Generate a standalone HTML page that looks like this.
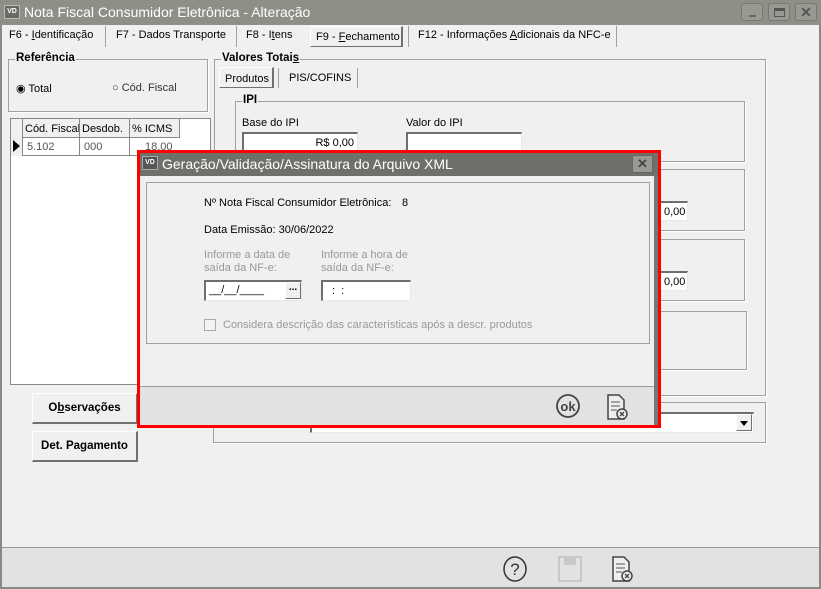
<!DOCTYPE html>
<html><head><meta charset="utf-8"><style>
*{box-sizing:border-box;margin:0;padding:0}
body{width:821px;height:589px;overflow:hidden;background:#f0f0f0;font-family:"Liberation Sans",sans-serif;font-size:11px;color:#000;position:relative}
.a{position:absolute}
.grp{position:absolute;border:1px solid #a0a0a0;box-shadow:1px 1px 0 #fff}
.lg{position:absolute;top:-8px;left:6px;background:#f0f0f0;font-weight:bold;padding:0 1px;font-size:11.5px}
.edit{position:absolute;background:#fff;border-top:2px solid #6e6e6e;border-left:2px solid #6e6e6e;border-bottom:1px solid #e8e8e8;border-right:1px solid #e8e8e8}
.btn{position:absolute;background:#f0f0f0;border:1px solid #fff;border-right:2px solid #707070;border-bottom:2px solid #707070;font-weight:bold;text-align:center;font-size:11.5px}
.tab{position:absolute;top:29px;height:20px;font-size:11px}
.sep{position:absolute;width:1px;background:#a0a0a0}
</style></head><body>
<div class="a" style="left:0;top:0;width:821px;height:589px;border:2px solid #8a8a85;border-top:none"></div>
<div class="a" style="left:0;top:0;width:821px;height:25px;background:#8f8f88"></div>
<div class="a" style="left:4px;top:5px;width:16px;height:14px;background:#6a6a66;border:1px solid #bbb;color:#fff;font-size:7px;font-weight:bold;text-align:center;line-height:12px">VD</div>
<div class="a" style="left:24px;top:4px;color:#fff;font-size:14px">Nota Fiscal Consumidor Eletrônica - Alteração</div>
<div class="a" style="left:741px;top:3px;width:22px;height:18px;border:1px solid #777;border-radius:3px;background:#999992"><div class="a" style="left:7px;top:11px;width:7px;height:2px;background:#666"></div></div>
<div class="a" style="left:768px;top:3px;width:22px;height:18px;border:1px solid #777;border-radius:3px;background:#999992"><div class="a" style="left:5px;top:4px;width:11px;height:9px;border:1px solid #555;border-top:3px solid #555"></div></div>
<div class="a" style="left:795px;top:3px;width:22px;height:18px;border:1px solid #777;border-radius:3px;background:#999992;color:#555;font-weight:bold;font-size:14px;text-align:center;line-height:16px">✕</div>
<div class="tab" style="left:9px">F6 - <u>I</u>dentificação</div>
<div class="sep" style="left:105px;top:26px;height:21px"></div>
<div class="tab" style="left:116px">F7 - Dados Transporte</div>
<div class="sep" style="left:236px;top:26px;height:21px"></div>
<div class="tab" style="left:246px">F8 - I<u>t</u>ens</div>
<div class="a" style="left:310px;top:26px;width:93px;height:21px;border:1px solid #fff;border-right:2px solid #707070;border-bottom:1px solid #707070;background:#f0f0f0"></div>
<div class="tab" style="left:316px;top:31px">F9 - <u>F</u>echamento</div>
<div class="sep" style="left:408px;top:26px;height:21px"></div>
<div class="tab" style="left:418px">F12 - Informações <u>A</u>dicionais da NFC-e</div>
<div class="sep" style="left:616px;top:26px;height:21px"></div>
<div class="grp" style="left:8px;top:59px;width:200px;height:53px"><div class="lg">Referência</div>
<div class="a" style="left:7px;top:22px">◉ Total</div><div class="a" style="left:103px;top:22px;color:#333">○ Cód. Fiscal</div></div>
<div class="a" style="left:10px;top:118px;width:201px;height:267px;background:#fff;border:1px solid #888"></div>
<div class="a" style="left:11px;top:119px;width:168px;height:19px;background:#f0f0f0;border-bottom:1px solid #888"></div>
<div class="a" style="left:11px;top:119px;width:12px;height:37px;background:#f0f0f0;border-right:1px solid #888"></div>
<div class="a" style="left:25px;top:123px">Cód. Fiscal</div>
<div class="sep" style="left:79px;top:119px;height:37px;background:#888"></div>
<div class="a" style="left:82px;top:123px">Desdob.</div>
<div class="sep" style="left:129px;top:119px;height:37px;background:#888"></div>
<div class="a" style="left:132px;top:123px">% ICMS</div>
<div class="sep" style="left:179px;top:119px;height:19px;background:#888"></div>
<div class="a" style="left:13px;top:140px;width:0;height:0;border-left:7px solid #000;border-top:6px solid transparent;border-bottom:6px solid transparent"></div>
<div class="a" style="left:27px;top:141px;color:#555">5.102</div>
<div class="a" style="left:84px;top:141px;color:#555">000</div>
<div class="a" style="left:145px;top:141px;color:#555">18,00</div>
<div class="a" style="left:23px;top:155px;width:157px;height:1px;background:#888"></div>
<div class="grp" style="left:214px;top:59px;width:552px;height:337px"><div class="lg">Valores Totai<u>s</u></div></div>
<div class="a" style="left:219px;top:67px;width:55px;height:21px;border:1px solid #fff;border-right:2px solid #707070;border-bottom:1px solid #707070;padding:5px 0 0 5px">Produtos</div>
<div class="a" style="left:289px;top:72px">PIS/COFINS</div>
<div class="sep" style="left:278px;top:68px;height:20px"></div>
<div class="sep" style="left:357px;top:68px;height:20px"></div>
<div class="grp" style="left:235px;top:101px;width:510px;height:61px"><div class="lg">IPI</div></div>
<div class="a" style="left:242px;top:117px">Base do IPI</div>
<div class="a" style="left:406px;top:117px">Valor do IPI</div>
<div class="edit" style="left:242px;top:132px;width:116px;height:20px;text-align:right;padding:3px 3px 0 0">R$ 0,00</div>
<div class="edit" style="left:406px;top:132px;width:116px;height:20px"></div>
<div class="grp" style="left:640px;top:169px;width:105px;height:62px"></div>
<div class="edit" style="left:640px;top:201px;width:48px;height:20px;padding:3px 0 0 22px">0,00</div>
<div class="grp" style="left:640px;top:239px;width:105px;height:62px"></div>
<div class="edit" style="left:640px;top:271px;width:48px;height:20px;padding:3px 0 0 22px">0,00</div>
<div class="grp" style="left:640px;top:311px;width:107px;height:59px"></div>
<div class="btn" style="left:32px;top:393px;width:106px;height:31px;padding-top:8px">O<u>b</u>servações</div>
<div class="btn" style="left:32px;top:431px;width:106px;height:31px;padding-top:8px">Det. Pa<u>g</u>amento</div>
<div class="grp" style="left:213px;top:402px;width:553px;height:41px"></div>
<div class="edit" style="left:310px;top:412px;width:444px;height:21px"></div>
<div class="a" style="left:736px;top:414px;width:16px;height:17px;background:#f0f0f0;border:1px solid #fff;border-right:1px solid #707070;border-bottom:1px solid #707070"><div class="a" style="left:3px;top:6px;border-top:5px solid #000;border-left:4px solid transparent;border-right:4px solid transparent"></div></div>
<div class="a" style="left:2px;top:547px;width:817px;height:40px;background:#e2e2e2;border-top:1px solid #999"></div>
<svg class="a" style="left:500px;top:553px" width="140" height="32">
<ellipse cx="15" cy="16" rx="11" ry="12" fill="none" stroke="#333" stroke-width="1.5"/>
<text x="15" y="22" font-size="17" text-anchor="middle" fill="#333" font-family="Liberation Sans">?</text>
<rect x="59" y="4" width="22" height="24" fill="none" stroke="#c8c8c8" stroke-width="2"/><rect x="64" y="4" width="12" height="8" fill="#c8c8c8"/>
<path d="M113 4h11l5 5v19h-16z" fill="#eee" stroke="#444" stroke-width="1.5"/><path d="M116 11h9M116 15h9M116 19h6" stroke="#555"/><circle cx="127" cy="23" r="5" fill="#eee" stroke="#444" stroke-width="1.5"/><path d="M125 21l4 4M129 21l-4 4" stroke="#444" stroke-width="1.3"/>
</svg>
<div class="a" style="left:137px;top:150px;width:524px;height:278px;border:3px solid #f00;background:#f0f0f0">
<div class="a" style="left:0;top:0;width:518px;height:23px;background:#70706b"></div>
<div class="a" style="left:2px;top:3px;width:16px;height:14px;background:#555;border:1px solid #aaa;color:#fff;font-size:7px;font-weight:bold;text-align:center;line-height:12px">VD</div>
<div class="a" style="left:22px;top:3px;color:#fff;font-size:14px">Geração/Validação/Assinatura do Arquivo XML</div>
<div class="a" style="left:492px;top:2px;width:21px;height:18px;background:#999992;border:1px solid #666;border-radius:2px;color:#444;font-weight:bold;font-size:13px;text-align:center;line-height:16px">✕</div>
<div class="a" style="left:514px;top:23px;width:4px;height:249px;background:#777"></div>
<div class="grp" style="left:6px;top:29px;width:504px;height:162px;box-shadow:none"></div>
<div class="a" style="left:64px;top:44px">Nº Nota Fiscal Consumidor Eletrônica:</div>
<div class="a" style="left:262px;top:44px">8</div>
<div class="a" style="left:64px;top:71px">Data Emissão: 30/06/2022</div>
<div class="a" style="left:64px;top:96px;color:#999;line-height:13px">Informe a data de<br>saída da NF-e:</div>
<div class="a" style="left:181px;top:96px;color:#999;line-height:13px">Informe a hora de<br>saída da NF-e:</div>
<div class="edit" style="left:64px;top:127px;width:98px;height:21px;padding:2px 0 0 3px">__/__/____</div>
<div class="a" style="left:145px;top:129px;width:16px;height:17px;background:#f0f0f0;border:1px solid #fff;border-right:1px solid #707070;border-bottom:1px solid #707070;font-weight:bold;font-size:10px;text-align:center;line-height:10px">...</div>
<div class="edit" style="left:181px;top:127px;width:90px;height:21px;padding:3px 0 0 9px">: &nbsp;:</div>
<div class="a" style="left:64px;top:166px;width:12px;height:12px;border:1px solid #aaa;background:#f4f4f4"></div>
<div class="a" style="left:83px;top:166px;color:#999">Considera descrição das características após a descr. produtos</div>
<div class="a" style="left:0;top:233px;width:514px;height:39px;background:#e2e2e2;border-top:1px solid #999"></div>
<svg class="a" style="left:408px;top:237px" width="80" height="32">
<circle cx="20" cy="16" r="11" fill="none" stroke="#444" stroke-width="1.8"/>
<text x="20" y="21" font-size="13" font-weight="bold" text-anchor="middle" fill="#444" font-family="Liberation Sans">ok</text>
<path d="M60 5h11l5 5v19h-16z" fill="#eee" stroke="#444" stroke-width="1.5"/><path d="M63 12h9M63 16h9M63 20h6" stroke="#555"/><circle cx="74" cy="24" r="5" fill="#eee" stroke="#444" stroke-width="1.5"/><path d="M72 22l4 4M76 22l-4 4" stroke="#444" stroke-width="1.3"/>
</svg>
</div>
</body></html>
